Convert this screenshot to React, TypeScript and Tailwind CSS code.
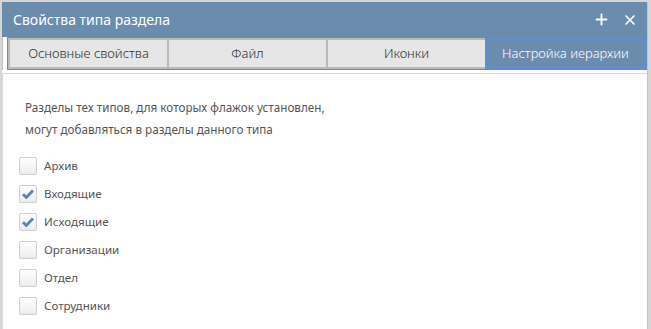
import { Plus, X } from "lucide-react";

const tabs = ["Основные свойства", "Файл", "Иконки", "Настройка иерархии"];

const items = [
  { label: "Архив", checked: false },
  { label: "Входящие", checked: true },
  { label: "Исходящие", checked: true },
  { label: "Организации", checked: false },
  { label: "Отдел", checked: false },
  { label: "Сотрудники", checked: false },
];

const font = "font-['Segoe_UI','Noto_Sans','Liberation_Sans',sans-serif]";

const App = () => {
  return (
    <div className={`w-[651px] h-[329px] overflow-hidden bg-[#d6d6d6] pt-[2px] pl-[2px] pr-[3px] ${font}`}>
      <div className="h-full flex flex-col bg-white border-r border-[#c4c4c4]">
        {/* заголовок */}
        <div className="h-[35px] shrink-0 bg-[#6a8cad] flex items-center justify-between pl-[11px] pr-[9px] text-white">
          <span className="text-[14px]">Свойства типа раздела</span>
          <div className="flex items-center gap-[12px]">
            <Plus size={17} strokeWidth={2.6} />
            <X size={16} strokeWidth={2.6} />
          </div>
        </div>

        {/* вкладки */}
        <div className="pl-[4px] border-l border-[#c4c4c4]">
          <div className="flex h-[33px] bg-[#6a8cad] p-[1px]">
            {tabs.map((t, i) => (
              <div
                key={t}
                className={
                  i === 3
                    ? "flex-1 flex items-center justify-center text-[13px] font-light text-white bg-[#6a8cad] border-2 border-[#5d8fd6]"
                    : "flex-1 flex items-center justify-center text-[13px] font-light text-[#2e2e2e] bg-[#e6e6e6] border-2 border-[#b9b9b9] border-r-0"
                }
              >
                {t}
              </div>
            ))}
          </div>
        </div>

        {/* содержимое */}
        <div className="flex-1 mt-[3px] border-t border-l border-[#d9d9d9] pl-[16px] pt-[22px]">
          <p className="text-[11.7px] leading-[22px] text-[#555] pl-[6px]">
            Разделы тех типов, для которых флажок установлен,
            <br />
            могут добавляться в разделы данного типа
          </p>
          <div className="mt-[17px] flex flex-col gap-[10px]">
            {items.map((it) => (
              <div key={it.label} className="flex items-center h-[18px]">
                <div className="w-[18px] h-[18px] rounded-[2px] border border-[#cfcfcf] bg-gradient-to-b from-white to-[#ececec] flex items-center justify-center">
                  {it.checked && (
                    <svg width="12" height="10" viewBox="0 0 12 10">
                      <path d="M1 5.2 L4.3 8.4 L11 1.6" fill="none" stroke="#5582b8" strokeWidth="2.8" />
                    </svg>
                  )}
                </div>
                <span className="ml-[7px] text-[11.6px] text-[#555]">{it.label}</span>
              </div>
            ))}
          </div>
        </div>
      </div>
    </div>
  );
};

export default App;
